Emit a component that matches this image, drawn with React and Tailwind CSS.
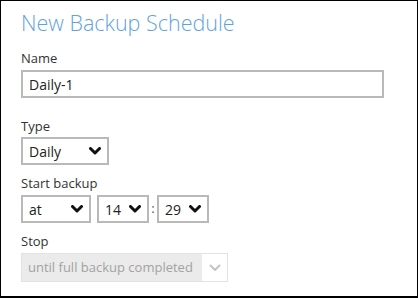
import React from "react";

function Chevron({ light }) {
  return (
    <svg width="12" height="8" viewBox="0 0 12 8" className="shrink-0">
      <path
        d="M1.5 1.5 L6 6 L10.5 1.5"
        fill="none"
        stroke={light ? "#c4c4c4" : "#111"}
        strokeWidth={light ? "2" : "3"}
        strokeLinecap="round"
        strokeLinejoin="round"
      />
    </svg>
  );
}

function Select({ value, w }) {
  return (
    <div
      className={`flex items-center justify-between border-2 border-[#b9b9b9] bg-white h-[28px] pl-[6px] pr-[6px] text-[14px] text-[#222] ${w}`}
    >
      <span>{value}</span>
      <Chevron />
    </div>
  );
}

export default function App() {
  return (
    <div
      className="w-[418px] h-[298px] bg-white border-l border-t border-r border-b-2 border-black flex flex-col pl-[20px]"
      style={{ fontFamily: '"Open Sans", "Noto Sans", sans-serif' }}
    >
      <div className="mt-[7px] text-[21.5px] leading-[29px] text-[#5fa3de] font-light">
        New Backup Schedule
      </div>
      <div className="mt-[12px] text-[13px] leading-[18px] text-[#333]">Name</div>
      <div className="mt-[3px] w-[363px] h-[28px] border-2 border-[#b9b9b9] flex items-center pl-[6px] text-[14px] text-[#222]">
        Daily-1
      </div>
      <div className="mt-[19px] text-[13px] leading-[18px] text-[#333]">Type</div>
      <div className="mt-[2px]">
        <Select value="Daily" w="w-[88px]" />
      </div>
      <div className="mt-[9px] text-[13px] leading-[18px] text-[#333]">Start backup</div>
      <div className="mt-[3px] flex items-center">
        <Select value="at" w="w-[70px]" />
        <div className="ml-[6px]">
          <Select value="14" w="w-[52px]" />
        </div>
        <span className="w-[8px] text-center text-[13px] text-[#555]">:</span>
        <Select value="29" w="w-[52px]" />
      </div>
      <div className="mt-[9px] text-[13px] leading-[18px] text-[#333]">Stop</div>
      <div className="mt-[3px] w-[207px] h-[29px] border border-[#e2e2e2] bg-[#ebebeb] flex items-center">
        <span className="flex-1 pl-[6px] text-[13px] text-[#a2a2a2] whitespace-nowrap">
          until full backup completed
        </span>
        <div className="w-[25px] h-full bg-white flex items-center justify-center">
          <Chevron light />
        </div>
      </div>
    </div>
  );
}
